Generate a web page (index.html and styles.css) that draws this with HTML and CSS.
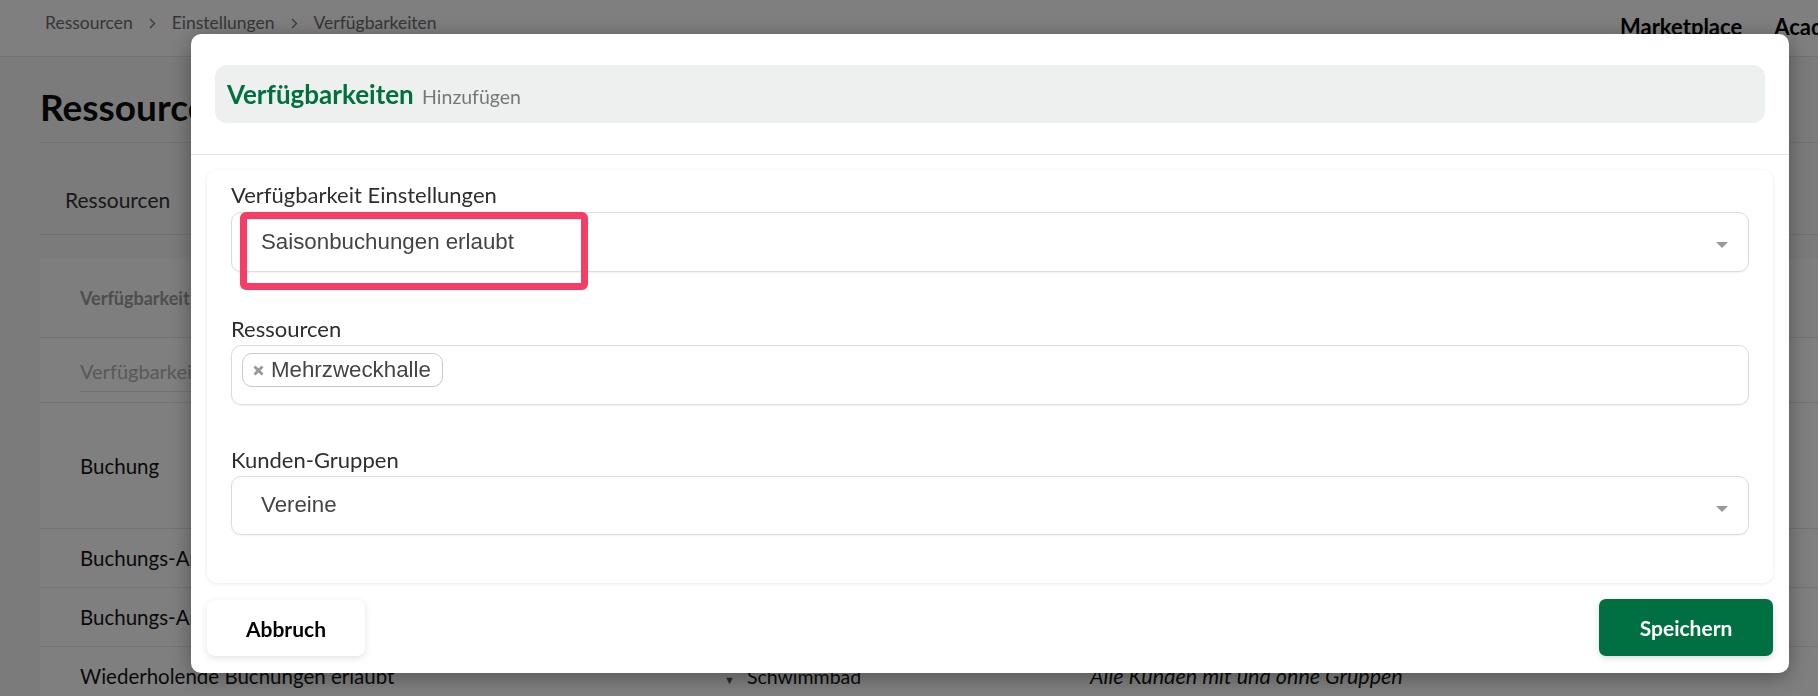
FILE: index.html
```html
<!DOCTYPE html>
<html lang="de">
<head>
<meta charset="utf-8">
<title>Verfügbarkeiten hinzufügen</title>
<link rel="stylesheet" href="styles.css">
</head>
<body>
<div class="page">
  <header class="topbar">
    <nav class="crumbs">
      <span>Ressourcen</span>
      <svg class="chev" width="7" height="11" viewBox="0 0 7 11"><polyline points="1,1 5.5,5.5 1,10" fill="none" stroke="currentColor" stroke-width="1.4"/></svg>
      <span>Einstellungen</span>
      <svg class="chev" width="7" height="11" viewBox="0 0 7 11"><polyline points="1,1 5.5,5.5 1,10" fill="none" stroke="currentColor" stroke-width="1.4"/></svg>
      <span>Verfügbarkeiten</span>
    </nav>
    <nav class="mainnav">
      <span>Marketplace</span>
      <span>Academy</span>
    </nav>
  </header>

  <main class="content">
    <h1 class="page-title">Ressourcen</h1>
    <div class="tabs">
      <span class="tab">Ressourcen</span>
      <span class="tab">Einstellungen</span>
    </div>

    <section class="table-card">
      <div class="trow thead">
        <span>Verfügbarkeit</span>
        <span>Ressourcen</span>
        <span>Kunden-Gruppen</span>
      </div>
      <div class="trow tfilter">
        <span class="filter-input">Verfügbarkeit</span>
        <span class="filter-input">Ressource</span>
        <span class="filter-input">Kunden-Gruppe</span>
      </div>
      <div class="trow tall">
        <span>Buchung</span>
        <span class="res">Mehrzweckhalle</span>
        <span class="grp">Alle Kunden mit und ohne Gruppen</span>
      </div>
      <div class="trow">
        <span>Buchungs-Anfragen erlaubt</span>
        <span class="res">Mehrzweckhalle</span>
        <span class="grp">Alle Kunden mit und ohne Gruppen</span>
      </div>
      <div class="trow">
        <span>Buchungs-Anfragen ohne Prüfung</span>
        <span class="res">Sporthalle</span>
        <span class="grp">Alle Kunden mit und ohne Gruppen</span>
      </div>
      <div class="trow">
        <span>Wiederholende Buchungen erlaubt</span>
        <span class="res"><span class="tri">▼</span>Schwimmbad</span>
        <span class="grp">Alle Kunden mit und ohne Gruppen</span>
      </div>
    </section>
  </main>
</div>

<div class="overlay"></div>

<div class="modal" role="dialog">
  <div class="modal-head">
    <div class="head-box">
      <h2 class="head-title">Verfügbarkeiten <small>Hinzufügen</small></h2>
    </div>
  </div>

  <div class="modal-body">
    <div class="form-card">
      <div class="field">
        <label class="field-label">Verfügbarkeit Einstellungen</label>
        <div class="select">
          <span class="select-value">Saisonbuchungen erlaubt</span>
          <span class="caret"></span>
          <span class="highlight"></span>
        </div>
      </div>

      <div class="field">
        <label class="field-label">Ressourcen</label>
        <div class="multi">
          <span class="tag">
            <svg class="tag-x" width="11" height="11" viewBox="0 0 11 11"><path d="M1.5 1.5 L9.5 9.5 M9.5 1.5 L1.5 9.5" stroke="#999" stroke-width="2.8" stroke-linecap="butt"/></svg>
            Mehrzweckhalle
          </span>
        </div>
      </div>

      <div class="field">
        <label class="field-label">Kunden-Gruppen</label>
        <div class="select short">
          <span class="select-value">Vereine</span>
          <span class="caret"></span>
        </div>
      </div>
    </div>
  </div>

  <div class="modal-foot">
    <button class="btn btn-cancel">Abbruch</button>
    <button class="btn btn-save">Speichern</button>
  </div>
</div>
</body>
</html>
```

FILE: styles.css
```css
* { box-sizing: border-box; }

html, body {
  margin: 0;
  padding: 0;
}

body {
  width: 1818px;
  height: 696px;
  overflow: hidden;
  background: #f6f6f6;
  font-family: "Lato", "Liberation Sans", sans-serif;
  color: #151515;
}

/* ---------- background page ---------- */
.page {
  width: 100%;
}

.topbar {
  height: 57px;
  background: #fff;
  border-bottom: 1px solid #e4e4e4;
  display: grid;
  grid-template-columns: 1620px auto;
  align-items: start;
  white-space: nowrap;
  overflow: hidden;
}

.crumbs {
  display: flex;
  align-items: center;
  gap: 16px;
  padding: 12px 0 0 45px;
  font-size: 17.5px;
  line-height: 22px;
  color: #6d6d6d;
}

.chev { color: #777; }

.mainnav {
  display: flex;
  gap: 32px;
  padding-top: 13px;
  font-size: 22px;
  font-weight: 700;
  color: #000;
  line-height: 28px;
}

.content {
  padding-left: 40px;
}

.page-title {
  margin: 0;
  padding: 15px 0 0 0;
  line-height: 70px;
  height: 86px;
  font-size: 37px;
  font-weight: 700;
  color: #0c0c0c;
  border-bottom: 1px solid #e2e2e2;
}

.tabs {
  height: 92px;
  display: flex;
  align-items: flex-end;
  border-bottom: 1px solid #e2e2e2;
}

.tab {
  padding: 0 25px 22px;
  font-size: 21px;
  line-height: 24px;
  color: #333;
}

.table-card {
  margin-top: 24px;
  background: #fff;
}

.trow {
  display: grid;
  grid-template-columns: 640px 370px 1fr;
  align-items: center;
  padding-left: 40px;
  height: 59px;
  border-bottom: 1px solid #e7e7ee;
  font-size: 20.5px;
  white-space: nowrap;
}

.thead {
  height: 79px;
  font-size: 18px;
  font-weight: 700;
  color: #9c9c9c;
  background: #fdfdfd;
}

.tfilter {
  height: 65px;
  font-size: 20px;
  color: #b2b2b2;
}

.filter-input {
  display: block;
  margin-right: 40px;
  padding: 10px 0 8px;
  border-bottom: 1px solid #e4e4e4;
}

.tall { height: 126px; }

.res { padding-left: 4px; font-size: 19.5px; }
.tri { font-size: 11px; margin-right: 12px; color: #555; }
.grp { font-style: italic; font-size: 21.5px; }

/* ---------- overlay ---------- */
.overlay {
  position: fixed;
  inset: 0;
  background: rgba(0, 0, 0, 0.5);
}

/* ---------- modal ---------- */
.modal {
  position: fixed;
  left: 191px;
  top: 34px;
  width: 1598px;
  height: 639px;
  background: #fff;
  border-radius: 10px;
  box-shadow: 0 4px 22px rgba(0, 0, 0, 0.35);
  display: flex;
  flex-direction: column;
}

.modal-head {
  padding: 31px 24px;
  border-bottom: 1px solid #e6e6e6;
}

.head-box {
  height: 58px;
  background: #edf0ef;
  border-radius: 12px;
  display: flex;
  align-items: center;
  padding-left: 12px;
}

.head-title {
  margin: 0;
  font-size: 26px;
  font-weight: 700;
  color: #00703c;
  line-height: 30px;
  padding-top: 2px;
  white-space: nowrap;
}

.head-title small {
  font-size: 19.5px;
  font-weight: 400;
  color: #777;
  margin-left: 2px;
}

.modal-body {
  padding: 15px 16px 0;
}

.form-card {
  border-radius: 10px;
  box-shadow: 0 1px 4px rgba(0, 0, 0, 0.09);
  padding: 13px 24px 48px;
}

.field + .field { margin-top: 45px; }
.field:first-child .field-label { margin-bottom: 6px; }
.field:last-child { margin-top: 43px; }

.field-label {
  display: block;
  font-size: 22px;
  line-height: 23px;
  margin-bottom: 5px;
  color: #2e2e2e;
}

.select, .multi {
  position: relative;
  height: 60px;
  border: 1px solid #dcdcdc;
  border-radius: 10px;
  box-shadow: 0 1px 2px rgba(0, 0, 0, 0.06);
  font-family: "Liberation Sans", Arial, sans-serif;
  font-size: 22.3px;
  color: #444;
}

.select {
  display: flex;
  align-items: center;
  padding-left: 29px;
}

.select.short { height: 59px; }

.select-value { padding-bottom: 1px; }

.caret {
  position: absolute;
  right: 20px;
  top: 29px;
  width: 0;
  height: 0;
  border-left: 6px solid transparent;
  border-right: 6px solid transparent;
  border-top: 6px solid #999;
}

.highlight {
  position: absolute;
  left: 8px;
  top: -1px;
  width: 348px;
  height: 78px;
  border: 7px solid #f63d65;
  border-radius: 6px;
}

.multi {
  display: flex;
  align-items: flex-start;
  padding: 7px 10px;
}

.tag {
  height: 34px;
  display: inline-flex;
  align-items: center;
  gap: 7px;
  padding: 0 11px 0 10px;
  border: 1px solid #cacaca;
  border-radius: 10px;
  line-height: 1;
}

.tag-x { flex: none; }

.modal-foot {
  display: flex;
  justify-content: space-between;
  align-items: flex-start;
  padding: 16px 16px 0;
}

.btn {
  border: none;
  font-family: "Lato", "Liberation Sans", sans-serif;
  font-size: 21px;
  font-weight: 700;
  border-radius: 8px;
  cursor: pointer;
}

.btn-cancel {
  width: 158px;
  height: 56px;
  margin-top: 1px;
  background: #fff;
  color: #000;
  box-shadow: 0 2px 7px rgba(0, 0, 0, 0.12);
}

.btn-save {
  width: 174px;
  height: 57px;
  background: #006f41;
  color: #fff;
  border-radius: 7px;
  box-shadow: 0 2px 6px rgba(0, 0, 0, 0.15);
}
```
